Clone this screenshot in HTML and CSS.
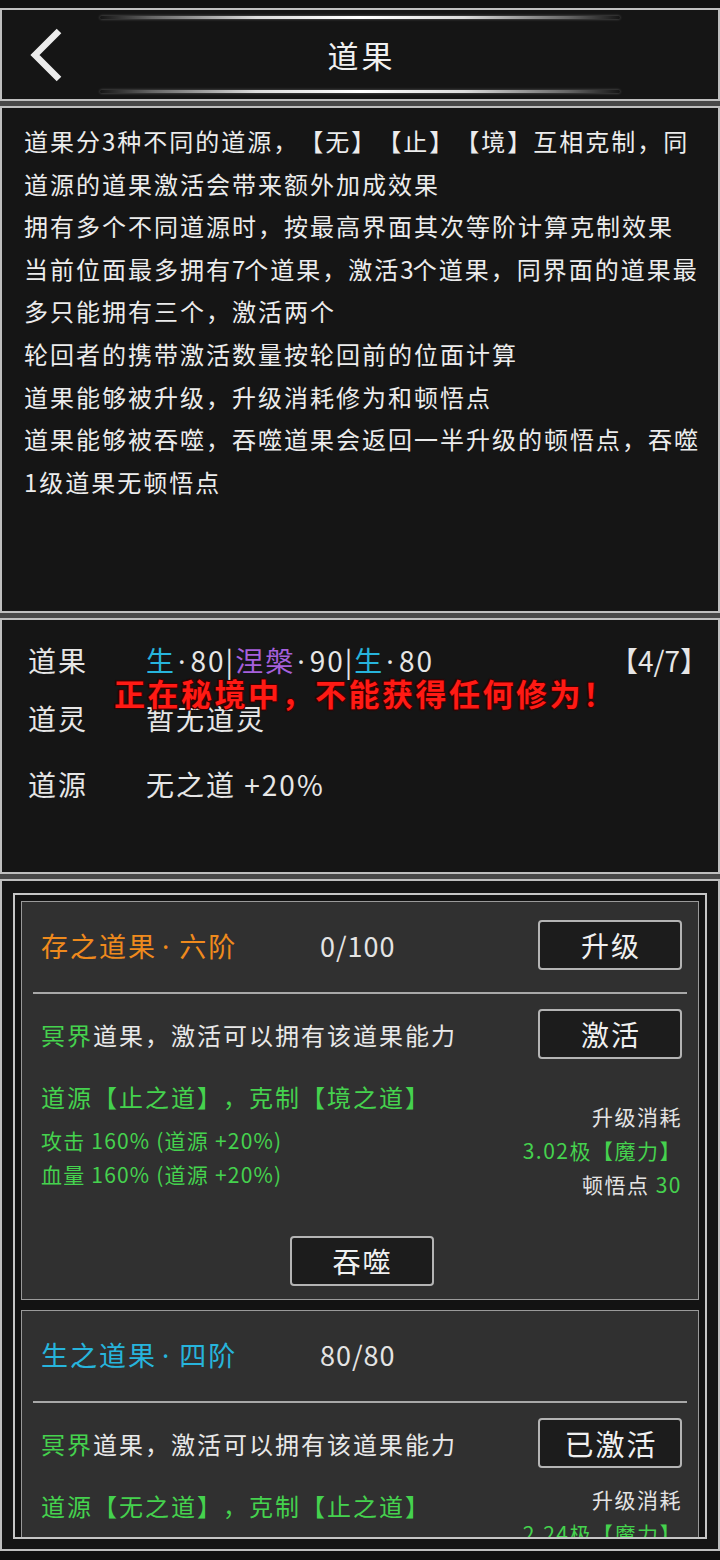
FILE: index.html
```html
<!DOCTYPE html>
<html lang="zh-CN">
<head>
<meta charset="utf-8">
<title>道果</title>
<link rel="stylesheet" href="styles.css">
</head>
<body>
<div class="screen">
  <header class="box topbar">
    <div class="glow"></div>
    <div class="bar">
      <svg class="back" width="40" height="56" viewBox="0 0 40 56" aria-hidden="true">
        <path d="M32 4 L8 28 L32 52" fill="none" stroke="#ececec" stroke-width="6.5" stroke-linejoin="miter"/>
      </svg>
      <h1 class="title">道果</h1>
      <span></span>
    </div>
    <div class="glow"></div>
  </header>

  <section class="box intro">
    <p>道果分3种不同的道源，【无】【止】【境】互相克制，同<br>道源的道果激活会带来额外加成效果</p>
    <p>拥有多个不同道源时，按最高界面其次等阶计算克制效果</p>
    <p>当前位面最多拥有<span class="num">7</span>个道果，激活<span class="num">3</span>个道果，同界面的道果最<br>多只能拥有三个，激活两个</p>
    <p>轮回者的携带激活数量按轮回前的位面计算</p>
    <p>道果能够被升级，升级消耗修为和顿悟点</p>
    <p>道果能够被吞噬，吞噬道果会返回一半升级的顿悟点，吞噬<br>1级道果无顿悟点</p>
  </section>

  <section class="box info">
    <div class="info-row">
      <span class="label">道果</span>
      <span class="value"><span class="cyan">生</span><span class="dot">·</span>80|<span class="purple">涅槃</span><span class="dot">·</span>90|<span class="cyan">生</span><span class="dot">·</span>80</span>
      <span class="count">【4/7】</span>
    </div>
    <div class="info-row row-2">
      <span class="label">道灵</span>
      <span class="value">暂无道灵</span>
    </div>
    <div class="info-row row-3">
      <span class="label">道源</span>
      <span class="value">无之道 +20%</span>
    </div>
    <div class="toast">正在秘境中，不能获得任何修为！</div>
  </section>

  <section class="box list">
    <div class="frame">
      <div class="scroll">
        <article class="card">
          <div class="card-head">
            <span class="name orange">存之道果<span class="tdot">·</span>六阶</span>
            <span class="progress">0/100</span>
            <button class="btn">升级</button>
          </div>
          <div class="divider"></div>
          <div class="card-row">
            <span class="desc"><span class="green">冥界</span>道果，激活可以拥有该道果能力</span>
            <button class="btn">激活</button>
          </div>
          <div class="detail">
            <div class="effects">
              <div class="source">道源【止之道】，克制【境之道】</div>
              <div class="stat">攻击 160% (道源 +20%)</div>
              <div class="stat">血量 160% (道源 +20%)</div>
            </div>
            <div class="cost">
              <div class="cost-line">升级消耗</div>
              <div class="cost-line green">3.02极【魔力】</div>
              <div class="cost-line">顿悟点 <span class="green">30</span></div>
            </div>
          </div>
          <div class="devour"><button class="btn">吞噬</button></div>
        </article>

        <article class="card">
          <div class="card-head">
            <span class="name cyan">生之道果<span class="tdot">·</span>四阶</span>
            <span class="progress">80/80</span>
            <span></span>
          </div>
          <div class="divider"></div>
          <div class="card-row">
            <span class="desc"><span class="green">冥界</span>道果，激活可以拥有该道果能力</span>
            <button class="btn btn-big">已激活</button>
          </div>
          <div class="detail">
            <div class="effects">
              <div class="source">道源【无之道】，克制【止之道】</div>
            </div>
            <div class="cost cost-raised">
              <div class="cost-line">升级消耗</div>
              <div class="cost-line green">2.24极【魔力】</div>
            </div>
          </div>
        </article>
      </div>
    </div>
  </section>
</div>
</body>
</html>
```

FILE: styles.css
```css
* { box-sizing: border-box; }
html, body { margin: 0; padding: 0; }
body {
  width: 720px;
  height: 1560px;
  overflow: hidden;
  background: #101010;
  font-family: "Noto Sans CJK SC", "Noto Sans", sans-serif;
  color: #e8e8e8;
  text-spacing-trim: space-all;
}
.screen {
  margin-top: 8px;
  display: flex;
  flex-direction: column;
  gap: 5px;
  background: #484848;
}
.box {
  position: relative;
  border: 2px solid #bfbfbf;
  background: #151515;
}

/* header */
.topbar {
  height: 93px;
  display: flex;
  flex-direction: column;
  padding: 6px 0 6px;
}
.glow {
  width: 520px;
  height: 3px;
  margin: 0 auto;
  border-radius: 2px;
  background: linear-gradient(90deg, rgba(255,255,255,0) 0%, rgba(255,255,255,0.35) 10%, rgba(255,255,255,0.85) 30%, #ffffff 50%, rgba(255,255,255,0.85) 70%, rgba(255,255,255,0.35) 90%, rgba(255,255,255,0) 100%);
  box-shadow: 0 0 3px rgba(255,255,255,0.35);
}
.bar {
  flex: 1;
  display: grid;
  grid-template-columns: 1fr auto 1fr;
  align-items: center;
}
.back { margin-left: 25px; display: block; }
.title {
  margin: 0;
  font-size: 31px;
  font-weight: 400;
  line-height: 1;
  letter-spacing: 3px;
  padding-left: 3px;
  color: #f0f0f0;
}

/* intro */
.intro {
  height: 507px;
  padding: 12px 0 0 22px;
  font-size: 24px;
  line-height: 42.6px;
  letter-spacing: 2px;
  white-space: nowrap;
  color: #ececec;
}
.intro p { margin: 0; }
.num { letter-spacing: -1px; }

/* info */
.info {
  height: 256px;
  padding: 20px 10px 0 26px;
  display: flex;
  flex-direction: column;
}
.info-row {
  display: flex;
  align-items: center;
  height: 40px;
  font-size: 28px;
  letter-spacing: 2px;
  color: #e6e6e6;
}
.row-2 { margin-top: 18px; }
.row-3 { margin-top: 26px; }
.label { width: 118px; flex: none; }
.value { flex: 1; }
.dot {
  font-family: "Noto Sans", sans-serif;
  margin: 0 3px 0 2px;
}
.count { flex: none; letter-spacing: 0; }
.toast {
  position: absolute;
  left: 112px;
  top: 53px;
  font-size: 31px;
  line-height: 40px;
  font-weight: 700;
  letter-spacing: 2.5px;
  color: #ff1a14;
  white-space: nowrap;
  text-shadow: 1px 1px 0 #3a0000, -1px -1px 0 #3a0000, 1px -1px 0 #3a0000, -1px 1px 0 #3a0000, 0 0 2px #220000;
}

.cyan { color: #27b4dc; }
.purple { color: #a660dc; }
.green { color: #45d24e; }
.orange { color: #ef8a1d; }

/* list */
.list {
  height: 672px;
  padding: 12px 11px 10px 11px;
}
.frame {
  height: 646px;
  border: 2px solid #c6c6c6;
  padding: 6px 6px 0 6px;
  background: #131313;
}
.scroll {
  height: 100%;
  overflow: hidden;
  display: flex;
  flex-direction: column;
  gap: 10px;
}
.card {
  flex: none;
  background: #303030;
  border: 1px solid #9a9a9a;
  padding: 18px 16px 13px 19px;
}
.card-head {
  display: grid;
  grid-template-columns: 279px 1fr auto;
  align-items: center;
  min-height: 50px;
}
.name {
  font-size: 27px;
  letter-spacing: 2px;
}
.tdot {
  font-family: "Noto Sans", sans-serif;
  margin: 0 8px 0 5px;
}
.progress {
  font-size: 27px;
  letter-spacing: 1px;
  color: #e4e4e4;
}
.btn {
  width: 144px;
  height: 50px;
  padding: 0 0 0 2px;
  border: 2px solid #b4b4b4;
  border-radius: 4px;
  background: #1c1c1c;
  color: #f0f0f0;
  font-family: inherit;
  font-size: 28px;
  letter-spacing: 2px;
  line-height: 1;
}
.btn-big { font-size: 29px; }
.divider {
  height: 2px;
  background: #a8a8a8;
  margin: 22px -5px 0 -8px;
}
.card-row {
  margin-top: 15px;
  display: flex;
  align-items: center;
  justify-content: space-between;
}
.desc {
  font-size: 24px;
  letter-spacing: 2px;
  color: #e8e8e8;
}
.detail {
  margin-top: 21px;
  display: flex;
  justify-content: space-between;
  align-items: flex-start;
}
.source {
  font-size: 24px;
  line-height: 34px;
  letter-spacing: 2px;
  color: #45d24e;
  margin-bottom: 9px;
}
.stat {
  font-size: 21px;
  line-height: 34px;
  letter-spacing: 1.2px;
  color: #45d24e;
}
.cost {
  margin-top: 19px;
  text-align: right;
}
.cost-raised { margin-top: -7px; }
.cost-line {
  font-size: 21px;
  line-height: 34px;
  letter-spacing: 1.5px;
  color: #e4e4e4;
}
.cost-line.green { color: #45d24e; }
.devour {
  margin-top: 35px;
  display: flex;
  justify-content: center;
}
```
